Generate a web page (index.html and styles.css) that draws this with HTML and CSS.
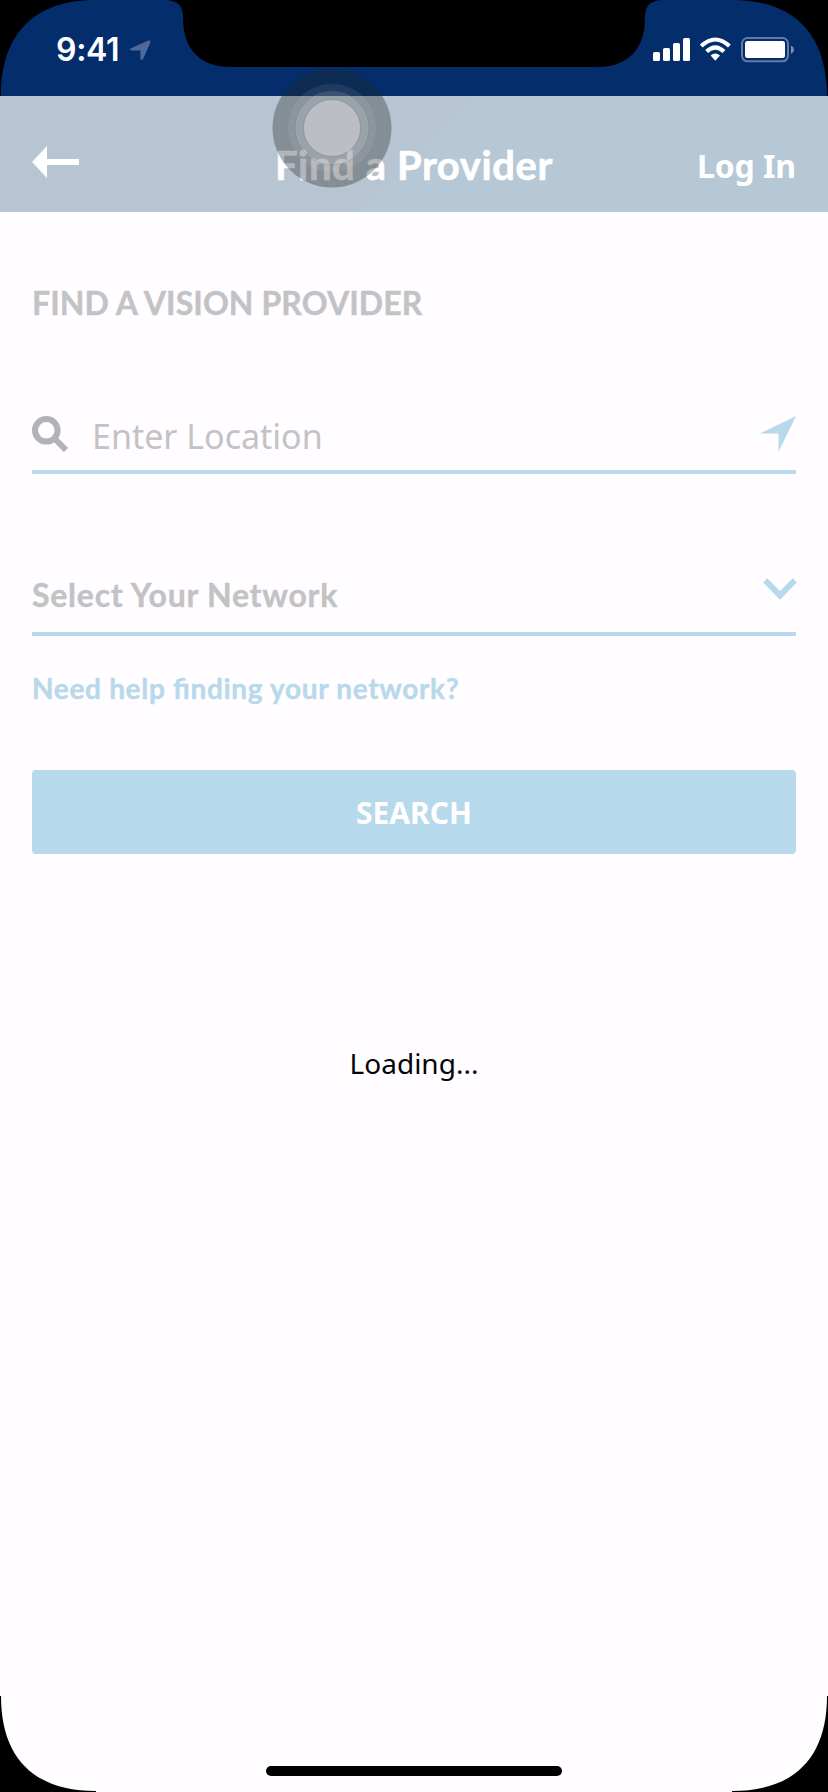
FILE: index.html
```html
<!DOCTYPE html>
<html lang="en">
<head>
<meta charset="utf-8">
<title>Find a Provider</title>
<link rel="stylesheet" href="styles.css">
</head>
<body>
<div class="phone">
  <div class="status">
    <span class="time">9:41</span>
    <svg class="loc" width="22" height="22" viewBox="0 0 22 22"><path d="M2 8.200 19.500 .6Q22-.2 21.300 2.400L14.200 18.800Q12.400 21.600 11.400 18.500V10.500H3Q-1.200 9.900 2 8.200Z" fill="#51699a"/></svg>
    <svg class="indicators" width="142" height="26" viewBox="0 0 142 26">
      <g fill="#fff">
        <rect x="0" y="15" width="7" height="9" rx="1.500"/><rect x="10" y="11" width="7" height="13" rx="1.500"/><rect x="20" y="6" width="7" height="18" rx="1.500"/><rect x="30" y="1" width="7" height="23" rx="1.500"/>
        <path d="M46.800 7.600Q62.300-6.800 77.800 7.600L75 10.600Q62.300-1.400 49.600 10.600Z"/>
        <path d="M52.200 13Q62.300 3.600 72.400 13L69.500 16Q62.300 9.400 55.100 16Z"/>
        <path d="M57.600 18.500Q62.300 14.700 67 18.500L62.300 23.700Z"/>
        <rect x="92" y="4" width="40" height="17" rx="2.500"/>
      </g>
      <rect x="89" y="1" width="46" height="23.300" rx="5.500" fill="none" stroke="#647ba8" stroke-width="2"/>
      <path d="M138 8.500Q141 10 141 12.800T138 17Z" fill="#7b8fb5"/>
    </svg>
  </div>
  <header class="header">
    <svg class="back" width="48" height="34" viewBox="0 0 48 34"><path d="M0 17 15 1V14H47V20H15V33Z" fill="#fff"/></svg>
    <h1 class="title">Find a Provider</h1>
    <span class="login">Log In</span>
  </header>
  <main class="content">
    <h2 class="section">FIND A VISION PROVIDER</h2>
    <div class="field location">
      <svg width="36" height="36" viewBox="0 0 36 36" fill="none" stroke="#b3b2b5"><circle cx="14.300" cy="14.300" r="11.300" stroke-width="6"/><path d="M22 22 34 34" stroke-width="6"/></svg>
      <span class="placeholder">Enter Location</span>
      <svg width="36" height="36" viewBox="0 0 36 36"><path d="M36 0 0 17.500H18.500V36Z" fill="#b7d9eb"/></svg>
    </div>
    <div class="field network">
      <span class="select">Select Your Network</span>
      <svg class="chevron" width="34" height="22" viewBox="0 0 34 22"><path d="M2.200 2.400 17 17.400 31.800 2.400" fill="none" stroke="#b7d9eb" stroke-width="6"/></svg>
    </div>
    <a class="help">Need help finding your network?</a>
    <div class="search">SEARCH</div>
    <p class="loading">Loading...</p>
  </main>
  <div class="home"></div>
  <svg class="touch" width="120" height="120" viewBox="0 0 120 120">
    <circle cx="60" cy="60" r="59.500" fill="#222628" fill-opacity=".34"/>
    <circle cx="60" cy="60" r="44" fill="#fff" fill-opacity=".08"/>
    <circle cx="60" cy="60" r="37" fill="#fff" fill-opacity=".12" stroke="#56606a" stroke-opacity=".2"/>
    <circle cx="60" cy="60" r="28.500" fill="#c6c7cd" fill-opacity=".75" stroke="#59626b" stroke-opacity=".3"/>
  </svg>
  <svg class="bezel" width="828" height="1792" viewBox="0 0 828 1792">
    <path d="M0 0H96C34 0 1 34 1 96H0Z M828 0H732C794 0 827 34 827 96H828Z M0 1792V1696H1C1 1758 34 1791 96 1791V1792Z M828 1792V1696H827C827 1758 794 1791 732 1791V1792Z"/>
    <path d="M166 0C178 1 183 5 183 18C183 49 200 67 231 67H597C628 67 645 49 645 18C645 5 650 1 662 0Z"/>
  </svg>
</div>
</body>
</html>
```
FILE: styles.css
```css
* { box-sizing: border-box; }
body { margin: 0; background: #fffdff; }
.phone { position: relative; width: 828px; height: 1792px; overflow: hidden; display: flex; flex-direction: column; background: #fffdff; font-family: "Noto Sans", sans-serif; }
.status { height: 96px; flex: none; background: #042e6b; display: flex; align-items: flex-start; padding: 30px 33px 0 56px; }
.time { width: 73px; font: 600 32px/40px Inter, sans-serif; color: #fff; white-space: nowrap; letter-spacing: -0.3px; }
.loc { margin-top: 10px; }
.indicators { margin: 7px 0 0 auto; }
.header { height: 116px; flex: none; display: grid; grid-template-columns: 160px 1fr 160px; padding: 0 32px; background: linear-gradient(135deg, #b7c4d1 0 50%, #b6c8d6 50%); color: #fff; }
.back { margin-top: 49px; }
.title { margin: 44px 0 0; font: 700 40px/50px Lato, sans-serif; text-align: center; white-space: nowrap; letter-spacing: 0.6px; -webkit-text-stroke: 0.6px; }
.login { margin-top: 48px; font-size: 32px; font-weight: 700; line-height: 44px; text-align: right; white-space: nowrap; letter-spacing: -0.1px; }
.content { flex: 1; padding: 71px 32px 0; }
.section { margin: 0; font: 700 32px/40px Lato, sans-serif; color: #c3c2c5; white-space: nowrap; letter-spacing: 0.1px; -webkit-text-stroke: 0.4px; }
.field { display: flex; border-bottom: 4px solid #b7d9eb; }
.location { height: 78px; margin-top: 73px; align-items: flex-start; padding-top: 20px; }
.placeholder { flex: 1; margin-left: 24px; margin-top: -2px; font-size: 34px; line-height: 44px; color: #c3c2c5; }
.network { height: 88px; margin-top: 74px; padding-top: 27px; justify-content: space-between; }
.select { font: 700 32px/40px Lato, sans-serif; color: #c3c2c5; letter-spacing: 0.75px; -webkit-text-stroke: 0.4px; }
.chevron { margin: 3px -1px 0 0; }
.help { display: block; margin-top: 34px; font: 700 28px/36px Lato, sans-serif; font-feature-settings: "liga" 1; color: #b7d9eb; white-space: nowrap; letter-spacing: 0.68px; -webkit-text-stroke: 0.4px; }
.search { height: 84px; margin-top: 64px; border-radius: 4px; background: #b6d9eb; color: #fff; font-size: 30px; font-weight: 700; line-height: 86px; text-align: center; }
.loading { margin: 189px 0 0; font-size: 28px; line-height: 40px; text-align: center; color: #050408; }
.home { width: 296px; height: 10px; border-radius: 5px; background: #000; align-self: center; margin-bottom: 16px; flex: none; }
.touch { position: absolute; left: 272px; top: 68px; }
.bezel { position: absolute; left: 0; top: 0; }
```
